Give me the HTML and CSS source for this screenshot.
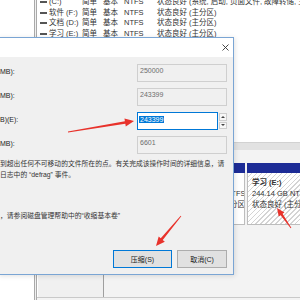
FILE: index.html
```html
<!DOCTYPE html>
<html lang="zh-CN">
<head>
<meta charset="utf-8">
<title>压缩</title>
<link rel="stylesheet" href="styles.css">
</head>
<body>
<div class="screen">
  <div class="app">
    <div class="tree"></div>
    <div class="sep"></div>
    <div class="main">
      <div class="list">
        <div class="rows">
          <div class="row"><span class="ic"></span><span>(C:)</span><span>简单</span><span>基本</span><span>NTFS</span><span>状态良好 (系统, 启动, 页面文件, 故障转储, 主分区)</span></div>
          <div class="row"><span class="ic"></span><span>软件 (F:)</span><span>简单</span><span>基本</span><span>NTFS</span><span>状态良好 (主分区)</span></div>
          <div class="row"><span class="ic"></span><span>文档 (D:)</span><span>简单</span><span>基本</span><span>NTFS</span><span>状态良好 (主分区)</span></div>
          <div class="row"><span class="ic"></span><span>学习 (E:)</span><span>简单</span><span>基本</span><span>NTFS</span><span>状态良好 (主分区)</span></div>
        </div>
      </div>
      <div class="splitter"></div>
      <div class="diskmap">
        <div class="disk">
          <div class="disklabel"></div>
          <div class="parts">
            <div class="part p-c"><div class="bar"></div><div class="pbody"><div class="pname">软件 (F:)</div><div>97.66 GB NTFS</div><div>状态良好 (主分区)</div></div></div>
            <div class="part p-a"><div class="bar"></div><div class="pbody"><div class="pname">文档 (D:)</div><div>244.14 GB NTFS</div><div>状态良好 (主分区)</div></div></div>
            <div class="part p-b"><div class="bar"></div><div class="pbody"><div class="pname">学习 (E:)</div><div>244.14 GB NTFS</div><div>状态良好 (主分区)</div></div></div>
          </div>
        </div>
      </div>
    </div>
  </div>

  <div class="dialog">
    <div class="titlebar">
      <svg class="close" viewBox="0 0 7 7"><path d="M0.5 0.5L6.5 6.5M6.5 0.5L0.5 6.5" stroke="#333" stroke-width="0.9" fill="none"/></svg>
    </div>
    <div class="dbody">
      <div class="fields">
        <div class="lbl">MB):</div>
        <div class="box">250000</div>
        <div class="lbl">MB):</div>
        <div class="box">243399</div>
        <div class="lbl">B)(E):</div>
        <div class="spinbox">
          <div class="input"><span class="seltext">243399</span></div>
          <div class="spin"><span class="up"></span><span class="down"></span></div>
        </div>
        <div class="lbl">MB):</div>
        <div class="box">6601</div>
      </div>
      <p class="msg">到超出任何不可移动的文件所在的点。有关完成该操作时间的详细信息，请<br>日志中的 “defrag” 事件。</p>
      <p class="msg msg2">，请参阅磁盘管理帮助中的“收缩基本卷”</p>
      <div class="buttons">
        <div class="btn ok">压缩(S)</div>
        <div class="btn cancel">取消(C)</div>
      </div>
    </div>
  </div>

  <svg class="arrows" viewBox="0 0 300 300" width="300" height="300">
    <polygon points="68.07,132.39 125.33,123.76 125.78,126.43 134,121 124.46,118.53 124.91,121.20 67.93,131.61"/>
    <polygon points="181.31,216.26 162.76,239.92 164.83,241.65 156,246 158.69,236.53 160.76,238.26 180.69,215.74"/>
    <polygon points="291.33,227.77 282.57,213.86 284.46,212.54 277,208 278.72,216.56 280.61,215.24 290.67,228.23"/>
  </svg>
</div>
</body>
</html>
```

FILE: styles.css
```css
* { box-sizing: border-box; margin: 0; padding: 0; }
html, body { width: 300px; height: 300px; overflow: hidden; background: #fff; }
body { font-family: "Liberation Sans", "Noto Sans CJK SC", sans-serif; color: #222; }

.screen { position: relative; width: 300px; height: 300px; overflow: hidden; }
.app { display: flex; width: 300px; height: 300px; }
.tree { width: 34px; flex-shrink: 0; background: #fff; }
.sep { width: 3px; flex-shrink: 0; background: #f0f0f0; border-left: 1px solid #a9a9a9; border-right: 1px solid #a9a9a9; }
.main { flex: 1; min-width: 0; display: flex; flex-direction: column; }

.list { height: 142px; background: #fff; padding-left: 3px; overflow: hidden; font-size: 7.5px; line-height: 10.5px; color: #333; }
.rows { margin-top: -3px; }
.row { display: grid; grid-template-columns: 9px 33px 21px 21px 33px max-content; align-items: center; white-space: nowrap; }
.ic { width: 7px; height: 2px; background: #555; }

.splitter { height: 8px; background: #e2e2e2; border-top: 1px solid #d2d2d2; }
.diskmap { flex: 1; background: #f3f3f3; padding-top: 13px; }
.disk { display: flex; height: 135px; border-bottom: 1px solid #c9c9c9; }
.disklabel { width: 67px; flex-shrink: 0; background: #f0f0f0; border-left: 1px solid #fff; border-right: 1px solid #9f9f9f; }
.parts { flex: 1; min-width: 0; display: flex; gap: 2px; padding-left: 2px; overflow: hidden; align-items: flex-start; }
.part { display: flex; flex-direction: column; flex-shrink: 0; }
.p-c { flex: 1 1 auto; min-width: 0; }
.p-a { width: 61px; }
.p-b { width: 73px; margin-right: -20px; }
.bar { height: 10px; background: #1d2c96; }
.pbody { height: 52px; background: #fff; border: 1px solid #bdbdbd; border-top: none; padding: 4px 3px 0; font-size: 7.5px; line-height: 11px; white-space: nowrap; overflow: hidden; color: #333; }
.p-b .pbody { padding-left: 4px; background: repeating-linear-gradient(135deg, #fff 0 2.5px, #d4d4d4 2.5px 3.5px); }
.pname { font-weight: bold; }

.dialog { position: absolute; left: -2px; top: 37px; width: 236px; height: 238px; border: 1px solid #7aa5d4; background: #f0f0f0; display: flex; flex-direction: column; font-size: 7px; color: #1e1e1e; box-shadow: 1px 1px 5px rgba(0, 0, 0, 0.12); }
.titlebar { height: 19px; background: #fff; display: flex; justify-content: flex-end; align-items: center; padding-right: 4px; }
.close { width: 7px; height: 7px; display: block; }
.dbody { flex: 1; display: flex; flex-direction: column; padding: 7px 6px 6px 1px; }
.fields { display: grid; grid-template-columns: 1fr 90px; row-gap: 6px; }
.lbl { padding-top: 3px; line-height: 9px; }
.box { height: 18px; border: 1px solid #cfcfcf; background: #f0f0f0; color: #6d6d6d; padding: 1px 0 0 2px; line-height: 10px; }
.spinbox { display: flex; height: 18px; }
.input { flex: 1; border: 1px solid #0078d7; background: #fff; padding: 1px 0 0 1px; line-height: 11px; }
.seltext { background: #0078d7; color: #fff; padding: 0 1px; }
.spin { width: 9px; display: flex; flex-direction: column; gap: 1px; padding: 1px 0 1px 1px; }
.spin span { flex: 1; background: #f7f7f7; border: 1px solid #cdcdcd; display: flex; align-items: center; justify-content: center; }
.spin .up::before { content: ""; border-left: 2px solid transparent; border-right: 2px solid transparent; border-bottom: 2px solid #444; }
.spin .down::before { content: ""; border-left: 2px solid transparent; border-right: 2px solid transparent; border-top: 2px solid #444; }

.msg { margin-top: 4px; font-size: 6.8px; line-height: 11px; white-space: nowrap; color: #333; }
.msg2 { margin-top: 30px; }
.buttons { margin-top: auto; display: flex; justify-content: flex-end; gap: 5px; }
.btn { height: 18px; background: #e1e1e1; border: 1px solid #adadad; font-size: 7px; display: flex; align-items: center; justify-content: center; color: #222; }
.ok { width: 59px; border-color: #0078d7; }
.cancel { width: 50px; }

.arrows { position: absolute; left: 0; top: 0; pointer-events: none; fill: #e8322b; }
```
